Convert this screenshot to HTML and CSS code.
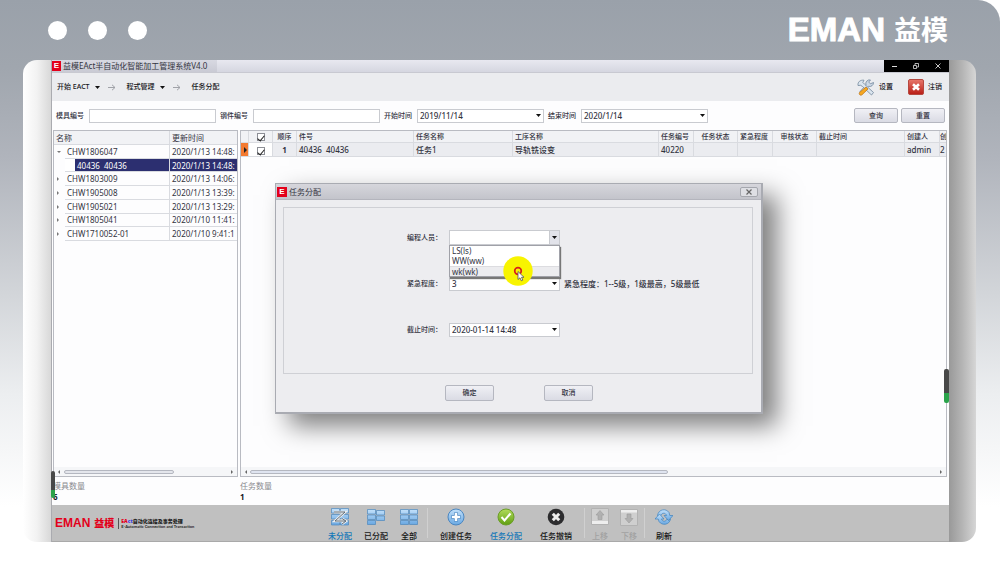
FILE: index.html
```html
<!DOCTYPE html>
<html lang="zh-CN">
<head>
<meta charset="utf-8">
<title>益模EAct半自动化智能加工管理系统V4.0</title>
<link rel="stylesheet" href="styles.css">
</head>
<body>
<svg class="defs" width="0" height="0" aria-hidden="true">
  <defs>
    <linearGradient id="blue" x1="0" y1="0" x2="0" y2="1"><stop offset="0" stop-color="#c2e0fa"/><stop offset="1" stop-color="#6aa8e2"/></linearGradient>
    <linearGradient id="green" x1="0" y1="0" x2="0" y2="1"><stop offset="0" stop-color="#b2dc5c"/><stop offset="1" stop-color="#5f9e10"/></linearGradient>
    <linearGradient id="red" x1="0" y1="0" x2="0" y2="1"><stop offset="0" stop-color="#e8786c"/><stop offset="1" stop-color="#b81c14"/></linearGradient>
    <symbol id="caret" viewBox="0 0 5 3"><path d="M0 0h5L2.5 3z" fill="#111"/></symbol>
    <symbol id="step" viewBox="0 0 8 7"><path d="M0 3.500h7M4 .8l3 2.700-3 2.700" fill="none" stroke="#a0a2a8"/></symbol>
  </defs>
</svg>
<div class="stage">
  <header class="stage-top">
    <div class="dots"><i></i><i></i><i></i></div>
    <div class="brand"><b>EMAN</b><span>益模</span></div>
  </header>
  <div class="card">
    <main class="window">
      <div class="titlebar">
        <div class="title-tab"><span class="e-icon">E</span><h1>益模EAct半自动化智能加工管理系统V4.0</h1></div>
        <div class="win-controls">
          <button aria-label="最小化"><svg width="6" height="6"><path d="M0 3.500h5" stroke="#ddd"/></svg></button>
          <button aria-label="还原"><svg width="6" height="6"><path d="M.5 2.500h3v3h-3zM2 2.500V.5h3.500v3.500H4" fill="none" stroke="#ddd" stroke-width=".8"/></svg></button>
          <button aria-label="关闭"><svg width="6" height="6"><path d="M.5.5l5 5M5.500.5l-5 5" stroke="#ddd" stroke-width=".9"/></svg></button>
        </div>
      </div>

      <nav class="toolbar">
        <button class="crumb">开始 EACT<svg width="5" height="3"><use href="#caret"/></svg></button>
        <svg width="8" height="7"><use href="#step"/></svg>
        <button class="crumb">程式管理<svg width="5" height="3"><use href="#caret"/></svg></button>
        <svg width="8" height="7"><use href="#step"/></svg>
        <button class="crumb">任务分配</button>
        <div class="toolbar-end">
          <button><svg width="18" height="17" viewBox="0 0 18 17"><path d="M16.500 3.500a3.800 3.800 0 0 1-5 3.800L5 14.500l-2-2 6-6.500a3.800 3.800 0 0 1 4.500-5L11.700 3l1.700 1.800z" fill="#cdd9e6" stroke="#71869c" stroke-width=".8"/><path d="M1 6.500C.6 3 3 .8 7 1.200L5.800 3.400l1.700 1.800 9 8.300-2 2.500-9-8.500-1.800-1.200z" fill="#dbe5ee" stroke="#71869c" stroke-width=".8"/><path d="M9 8l2 2-6 5.800c-1.600 1.200-3.600-.6-2.400-2.400z" fill="#f6a821" stroke="#ba7010" stroke-width=".7"/></svg>设置</button>
          <button><svg width="16" height="16" viewBox="0 0 16 16"><rect x=".5" y=".5" width="15" height="15" rx="1.500" fill="url(#red)" stroke="#b5483f"/><path d="M5 5.200l6 5.600M11 5.200l-6 5.600" stroke="#fff" stroke-width="2.600"/></svg>注销</button>
        </div>
      </nav>

      <form class="filters">
        <label for="mold">模具编号</label><input id="mold" type="text">
        <label for="part">钢件编号</label><input id="part" type="text">
        <label for="from">开始时间</label>
        <span class="combo"><select id="from"><option>2019/11/14</option></select><svg width="5" height="3"><use href="#caret"/></svg></span>
        <label for="to">结束时间</label>
        <span class="combo"><select id="to"><option>2020/1/14</option></select><svg width="5" height="3"><use href="#caret"/></svg></span>
        <div class="filter-actions"><button type="button">查询</button><button type="button">重置</button></div>
      </form>

      <div class="panes">
        <section class="pane molds">
          <div class="grid-box">
            <table class="mold-table">
              <colgroup><col class="w-toggle"><col><col class="w-updated"></colgroup>
              <thead><tr><th colspan="2">名称</th><th>更新时间</th></tr></thead>
              <tbody>
                <tr><td class="toggle open"><i></i></td><td>CHW1806047</td><td>2020/1/13 14:48:</td></tr>
                <tr class="selected"><td class="toggle"></td><td class="child"><span>40436&nbsp; 40436</span></td><td>2020/1/13 14:48:</td></tr>
                <tr><td class="toggle"><i></i></td><td>CHW1803009</td><td>2020/1/13 14:06:</td></tr>
                <tr><td class="toggle"><i></i></td><td>CHW1905008</td><td>2020/1/13 13:39:</td></tr>
                <tr><td class="toggle"><i></i></td><td>CHW1905021</td><td>2020/1/13 13:29:</td></tr>
                <tr><td class="toggle"><i></i></td><td>CHW1805041</td><td>2020/1/10 11:41:</td></tr>
                <tr><td class="toggle"><i></i></td><td>CHW1710052-01</td><td>2020/1/10 9:41:1</td></tr>
              </tbody>
            </table>
            <div class="scroll"><i class="arrow left"></i><span class="thumb"></span><i class="arrow"></i></div>
          </div>
          <dl class="count"><dt>模具数量</dt><dd>6</dd></dl>
          <span class="meter meter-left"></span>
        </section>
        <section class="pane tasks">
          <div class="grid-box">
            <table class="task-table">
              <colgroup><col class="c8"><col class="c24"><col class="c24"><col class="c117"><col class="c99"><col><col class="c35"><col class="c44"><col class="c35"><col class="c44"><col class="c88"><col class="c35"><col class="c6"></colgroup>
              <thead><tr><th></th><th class="mid"><input type="checkbox" checked aria-label="全选"></th><th class="mid">顺序</th><th>件号</th><th>任务名称</th><th>工序名称</th><th>任务编号</th><th class="mid">任务状态</th><th>紧急程度</th><th class="mid">审核状态</th><th>截止时间</th><th>创建人</th><th class="edge">创</th></tr></thead>
              <tbody><tr><td class="marker"><i></i></td><td class="mid white"><input type="checkbox" checked aria-label="选择任务1"></td><td class="mid"><b>1</b></td><td>40436&nbsp; 40436</td><td>任务1</td><td>导轨铣设变</td><td>40220</td><td></td><td></td><td></td><td></td><td>admin</td><td class="edge">2</td></tr></tbody>
            </table>
            <div class="scroll"><i class="arrow left"></i><span class="thumb"></span><i class="arrow"></i></div>
          </div>
          <dl class="count"><dt>任务数量</dt><dd>1</dd></dl>
          <span class="meter meter-right"></span>
        </section>
      </div>

      <footer class="actions">
        <div class="foot-brand"><b>EMAN</b><span>益模</span>
          <div class="foot-sub"><strong><em>EA</em><u>ct</u>自动化连接及事务处理</strong><small>E-Automatic Connection and Transaction</small></div>
        </div>
        <div class="group g1">
          <button class="active"><svg width="18" height="18" viewBox="0 0 18 18"><g fill="url(#blue)" stroke="#4d88bd" stroke-width=".7"><path d="M.5.5h8v4.500h-8zM9.500.5h8v4.500h-8zM.5 6.500h8V11h-8zM9.500 6.500h8V11h-8zM.5 12.500h8V17h-8zM9.500 12.500h8V17h-8z"/></g><path d="M3 4h11L4 13h10m-3-2.500l4 2.500-4 3" fill="none" stroke="#eee" stroke-width="2.500"/><path d="M3 4h11L4 13h10m-3-2.500l4 2.500-4 3" fill="none" stroke="#50606e" stroke-width=".9"/></svg>未分配</button>
          <button><svg width="18" height="18" viewBox="0 0 18 18"><g fill="url(#blue)" stroke="#4d88bd" stroke-width=".7"><path d="M.5 1.500h8V6h-8zM9.500 2.500h8V7h-8zM.5 7h8v4.500h-8zM9.500 8h8v4.500h-8zM.5 12.500h8v4h-8z"/></g></svg>已分配</button>
          <button><svg width="18" height="18" viewBox="0 0 18 18"><g fill="url(#blue)" stroke="#4d88bd" stroke-width=".7"><path d="M.5 1.500h8V6h-8zM9.500 1.500h8V6h-8zM.5 7h8v4.500h-8zM9.500 7h8v4.500h-8zM.5 12.500h8v4h-8zM9.500 12.500h8v4h-8z"/></g></svg>全部</button>
        </div>
        <div class="group g2">
          <button><svg width="18" height="18" viewBox="0 0 18 18"><circle cx="9" cy="9" r="8" fill="url(#blue)" stroke="#4b86c0"/><path d="M9 4.500v9M4.500 9h9" stroke="#4b86c0" stroke-width="4"/><path d="M9 5v8M5 9h8" stroke="#fff" stroke-width="2.600"/></svg>创建任务</button>
          <button class="active"><svg width="18" height="18" viewBox="0 0 18 18"><circle cx="9" cy="9" r="8" fill="url(#green)" stroke="#6b9d28"/><path d="M4.500 9l3 3.500 6-7" fill="none" stroke="#fff" stroke-width="2"/></svg>任务分配</button>
          <button><svg width="18" height="18" viewBox="0 0 18 18"><circle cx="9" cy="9" r="8.300" fill="#2c2c2e"/><path d="M5.800 5.800l6.400 6.400M12.200 5.800l-6.400 6.400" stroke="#eee" stroke-width="3"/></svg>任务撤销</button>
        </div>
        <div class="group g3">
          <button disabled><svg width="18" height="18" viewBox="0 0 18 18"><path d="M.5.5h17v16H.5z" fill="#cfcfcf" stroke="#b2b2b2"/><path d="M1 13h16v3H1z" fill="#eee"/><path d="M9 2.500l4 4.500h-2v4.500H7V7H5z" fill="#b0b0b0" stroke="#9c9c9c" stroke-width=".6"/></svg>上移</button>
          <button disabled><svg width="18" height="18" viewBox="0 0 18 18"><path d="M.5 1.500h17v16H.5z" fill="#cfcfcf" stroke="#b2b2b2"/><path d="M1 2h16v2.500H1z" fill="#eee"/><path d="M9 15l4-4.500h-2V6H7v4.500H5z" fill="#b0b0b0" stroke="#9c9c9c" stroke-width=".6"/></svg>下移</button>
        </div>
        <div class="group g4">
          <button><svg width="18" height="18" viewBox="0 0 18 18"><g fill="url(#blue)" stroke="#3f82bd" stroke-width=".7"><path d="M2.500 7.500C3.500 1 11 0 14 4.500l.8 3H18l-4.500 5-4.500-5h2.600C10.500 4.500 7 4.500 6 7.500z"/><path d="M15.500 11c-1 6-8.500 7-11.500 2.500l-.8-2.500H0l4.500-5L9 11H6.400c1.100 3 4.600 3 5.600 0l1.500 1.500z"/></g></svg>刷新</button>
        </div>
      </footer>

      <div class="dialog" role="dialog" aria-labelledby="dlg-title">
        <div class="dialog-title"><span class="e-icon">E</span><h2 id="dlg-title">任务分配</h2><button aria-label="关闭"><svg width="6" height="6"><path d="M.5.5l5 5M5.500.5l-5 5" stroke="#666" stroke-width="1.200"/></svg></button></div>
        <div class="dialog-body">
          <div class="fields">
            <label for="coder">编程人员：</label>
            <div class="combo open"><input id="coder" type="text"><svg width="5" height="3"><use href="#caret"/></svg>
              <ul class="menu"><li>LS(ls)</li><li>WW(ww)</li><li class="hover">wk(wk)</li></ul>
              <svg class="pointer" width="30" height="30" viewBox="0 0 30 30"><circle cx="15" cy="15" r="14.700" fill="#f8f400"/><circle cx="15" cy="15" r="3.300" fill="none" stroke="#d8201c" stroke-width="1.700"/><path d="M15 15.500v8l2-1.700 1.300 3 1.500-.7-1.300-2.800h2.500z" fill="#fff" stroke="#555" stroke-width=".8"/></svg>
            </div>
            <span></span>
            <label for="level">紧急程度：</label>
            <div class="combo"><select id="level"><option>3</option></select><svg width="5" height="3"><use href="#caret"/></svg></div>
            <span class="hint">紧急程度：1--5级，1级最高，5级最低</span>
            <label for="due">截止时间：</label>
            <div class="combo"><select id="due"><option>2020-01-14 14:48</option></select><svg width="5" height="3"><use href="#caret"/></svg></div>
            <span></span>
          </div>
          <div class="dialog-actions"><button>确定</button><button>取消</button></div>
        </div>
      </div>
    </main>
  </div>
</div>
</body>
</html>
```
FILE: styles.css
```css
* { box-sizing: border-box; }
body { margin: 0; background: #fff; color: #33343f; font: 500 7px/10px "Noto Sans", "Noto Sans CJK SC", sans-serif; }
button, input, select { font: inherit; color: inherit; margin: 0; }
button { display: flex; align-items: center; justify-content: center; padding: 0; border: 0; background: none; white-space: nowrap; }
h1, h2, dl, dd, ul { margin: 0; padding: 0; }
svg { display: block; flex: none; }
.defs { position: absolute; }

.stage { display: flex; flex-direction: column; min-height: 100vh; padding: 0 24px 21px 23px; border-top-right-radius: 22px; background: linear-gradient(#9aa1aa 0, #a0a6ae 12%, #b0b4bc 28%, #d2d5d9 52%, #eceef0 70%, #fff 90%); }
.stage-top { display: flex; flex: none; justify-content: space-between; height: 60px; padding: 0 28px 0 25px; align-items: center; }
.dots { display: flex; gap: 21px; }
.dots i { width: 19px; height: 19px; border-radius: 50%; background: #fff; }
.brand { display: flex; align-items: center; gap: 9px; color: #fff; font-size: 27px; line-height: 40px; font-weight: 700; }
.brand b { font: bold 33px/40px "Liberation Sans", sans-serif; -webkit-text-stroke: 1px #fff; }

.card { display: flex; flex: 1; padding: 0 27px 0 28px; border-radius: 14px; overflow: hidden; background: linear-gradient(90deg, #fff 0, #f2f2f2 14px, #d8d8d8 28px, #999 calc(100% - 27px), #b4b4b4 calc(100% - 14px), #d6d6d6); }
.window { position: relative; display: flex; flex: 1; flex-direction: column; min-width: 0; background: #fdfdfe; border-left: 1px solid #aaabb0; }

.titlebar { display: flex; height: 13px; justify-content: space-between; background: linear-gradient(#e8e8f0, #d5d6e0); border-bottom: 1px solid #c8c9d1; }
.title-tab { display: flex; align-items: center; gap: 2px; padding-right: 10px; background: linear-gradient(#d8d9e2, #c9cad4); }
h1 { font-size: 8px; line-height: 12px; font-weight: 400; }
.e-icon { display: grid; place-items: center; width: 9px; height: 10px; background: #e3001b; color: #fff; font: bold 8px/10px "Liberation Sans", sans-serif; }
.win-controls { display: flex; justify-content: space-around; width: 65px; height: 12px; background: #000; }
.win-controls button { width: 21px; }

.toolbar { display: flex; align-items: center; gap: 8px; height: 28px; padding: 0 7px 0 5px; background: #ebecef; color: #16161a; }
.crumb { gap: 5px; }
.crumb + svg + .crumb { margin-left: 3px; }
.toolbar-end { display: flex; gap: 15px; margin-left: auto; }
.toolbar-end button { gap: 4px; }

.filters { display: flex; align-items: center; height: 29px; padding: 0 4px; }
.filters label { margin-right: 5px; }
.filters > input, .filters .combo { flex: 0 1 127px; min-width: 0; margin-right: 4px; }
input[type="text"], select { width: 100%; height: 14px; padding: 0 2px; border: 1px solid #c9cbd0; border-radius: 0; background: #fff; appearance: none; outline: 0; }
.combo { position: relative; display: grid; align-items: center; }
.combo > * { grid-area: 1 / 1; }
.combo > svg { justify-self: end; margin-right: 3px; }
.filter-actions { display: flex; gap: 3px; margin-left: auto; }
.filter-actions button, .dialog-actions button { width: 44px; height: 15px; border: 1px solid #b5b7c0; border-radius: 2px; background: linear-gradient(#f0f0f5, #dadbe4); }

.panes { display: grid; grid-template-columns: 185px 1fr; gap: 2px; flex: 1; padding: 0 2px 0 1px; min-height: 0; }
.pane { position: relative; display: flex; flex-direction: column; min-width: 0; }
.grid-box { display: flex; flex: 1; flex-direction: column; border: 1px solid #b9bbc2; overflow: hidden; }
table { width: 100%; table-layout: fixed; border-collapse: separate; border-spacing: 0; }
th, td { padding: 0 0 0 2px; border-right: 1px solid #d9dbe0; border-bottom: 1px solid #d9dbe0; font-weight: 500; text-align: left; white-space: nowrap; line-height: 11px; }
th { background: #f1f2f5; }
th:last-child, td:last-child { border-right: 0; }
.mold-table { height: 110px; font-size: 8px; }
.mold-table th, .mold-table td { font-weight: 400; }
.mold-table th { height: 14px; }
.w-toggle { width: 11px; }
.w-updated { width: 67px; }
.mold-table .toggle { padding-left: 3px; border: 0; }
.toggle i { display: block; width: 0; border: 2px solid transparent; border-left-color: #777; border-right: 0; }
.toggle.open i { border: 2px solid transparent; border-top-color: #777; border-bottom: 0; }
.selected td { color: #fff; background: #2c2f70; }
.selected .toggle { background: none; }
.selected .child { padding-left: 10px; background: linear-gradient(90deg, #fff 10px, #2c2f70 10px); }
.child span { padding-left: 2px; }
.task-table { height: 26px; }
.task-table td { background: #ebecf0; }
.task-table .mid { padding: 0; text-align: center; }
.task-table .white { background: #fff; }
.task-table .marker { padding: 0 0 0 3px; background: #f47a30; }
.task-table .edge { padding: 0; overflow: hidden; }
.task-table td { font-size: 8px; }
.marker i { display: block; width: 0; border: 3px solid transparent; border-left-color: #222; border-right: 0; }
.c6 { width: 6px; } .c8 { width: 8px; } .c24 { width: 24px; } .c35 { width: 35px; } .c44 { width: 44px; } .c88 { width: 88px; } .c99 { width: 99px; } .c117 { width: 117px; }
input[type="checkbox"] { display: inline-grid; place-items: center; width: 8px; height: 8px; border: 1px solid #8d8f96; background: #fff; appearance: none; vertical-align: middle; }
input[type="checkbox"]:checked::after { content: ""; width: 3px; height: 6px; margin-bottom: 2px; border: solid #222; border-width: 0 1px 1px 0; transform: rotate(40deg); }

.scroll { display: flex; align-items: center; height: 9px; margin-top: auto; padding: 0 4px; background: #f5f6f8; }
.thumb { height: 4px; margin-left: 4px; border: 1px solid #b4b7c0; border-radius: 2px; background: #e4e6ec; width: 110px; }
.tasks .thumb { width: 60%; margin-left: 3px; background: #dfe4f0; }
.arrow { border: 2px solid transparent; border-left-color: #666; border-right: 0; margin-left: auto; }
.arrow.left { border: 2px solid transparent; border-right-color: #666; border-left: 0; margin-left: 0; }
.count { height: 28px; padding-top: 3px; font-size: 8px; line-height: 11px; color: #8a8a8e; font-weight: 400; }
.count dd { color: #15161e; font-weight: 700; }
.meter { position: absolute; width: 5px; border-radius: 2px; background: linear-gradient(#484848 70%, #2ba34a 70%); }
.meter-left { left: -2px; bottom: 7px; width: 4px; height: 27px; }
.meter-right { right: -2px; bottom: 102px; height: 34px; }

.actions { display: flex; align-items: stretch; height: 37px; background: #c0c0c0; border-bottom: 1px solid #a9a9a9; }
.foot-brand { display: flex; align-items: center; width: 270px; flex: none; padding-left: 3px; gap: 4px; color: #e3001b; font-size: 10px; font-weight: 900; }
.foot-brand b { font: bold 12px/14px "Liberation Sans", sans-serif; }
.foot-sub { display: flex; flex-direction: column; padding-left: 2px; border-left: 1px solid #555; color: #222; white-space: nowrap; }
.foot-sub strong { font-size: 5px; line-height: 6px; font-weight: 900; }
.foot-sub em { color: #e3001b; font-style: normal; }
.foot-sub u { color: #3c3ce0; text-decoration: none; }
.foot-sub small { font: bold 4px/5px Lato, sans-serif; }
.group { display: flex; align-items: center; margin: 3px 0; padding: 0 6px; }
.group + .group { border-left: 1px solid #d0d0d0; }
.group button { flex-direction: column; gap: 4px; min-width: 18px; padding-top: 2px; font-size: 8px; line-height: 11px; color: #151515; }
.group .active { color: #1377b8; }
.group button:disabled { color: #a2a2a2; }
.g1 { gap: 12px; padding-right: 9px; }
.g2 { gap: 18px; padding: 0 12px; }
.g3 { gap: 11px; }
.g4 { padding: 0 10px; }

.dialog { position: absolute; left: 223px; top: 123px; width: 488px; background: #ededf0; border: 1px solid #a9abb2; border-width: 1px 2px 2px 1px; box-shadow: 14px 12px 24px rgba(0, 0, 0, .5); }
.dialog-title { display: flex; align-items: center; gap: 2px; height: 16px; padding: 0 3px 0 1px; background: linear-gradient(#d6d6dc, #c3c4cb); border-bottom: 1px solid #b4b5bd; }
.dialog-title .e-icon { width: 10px; }
h2 { font-size: 8px; line-height: 12px; font-weight: 400; }
.dialog-title button { width: 18px; height: 10px; margin-left: auto; border: 1px solid #a5a7ae; border-radius: 2px; background: #dedfe4; }
.dialog-body { padding: 7px 8px 11px 7px; }
.fields { display: grid; grid-template-columns: 158px 111px 1fr; grid-template-rows: 15px 15px 15px; row-gap: 31px; column-gap: 4px; align-items: center; padding: 22px 0 36px 3px; border: 1px solid #cfd0d5; height: 167px; }
.fields label { padding-right: 3px; text-align: right; }
.fields select, .filters select, .hint { font-size: 8px; }
.hint { font-size: 8px; }
.open input { padding-right: 12px; height: 15px; }
.open > svg:not(.pointer) { z-index: 1; box-sizing: content-box; margin-right: 1px; padding: 5px 2px; border-left: 1px solid #c9cbd0; background: #e2e3ea; }
.menu { position: absolute; z-index: 2; top: 15px; left: 0; right: 0; list-style: none; background: #fff; border: 1px solid #a0a1a8; box-shadow: 1px 2px 1px #777; font-size: 8px; line-height: 10px; font-weight: 400; }
.menu li { padding-left: 2px; }
.menu .hover { background: #ececef; border-top: 1px solid #dcdce0; line-height: 9px; }
.combo .pointer { position: absolute; z-index: 3; left: 54px; top: 26px; margin: 0; }
.dialog-actions { display: flex; justify-content: center; gap: 50px; padding: 11px 0 0 2px; }
.dialog-actions button { width: 49px; height: 16px; }
```
